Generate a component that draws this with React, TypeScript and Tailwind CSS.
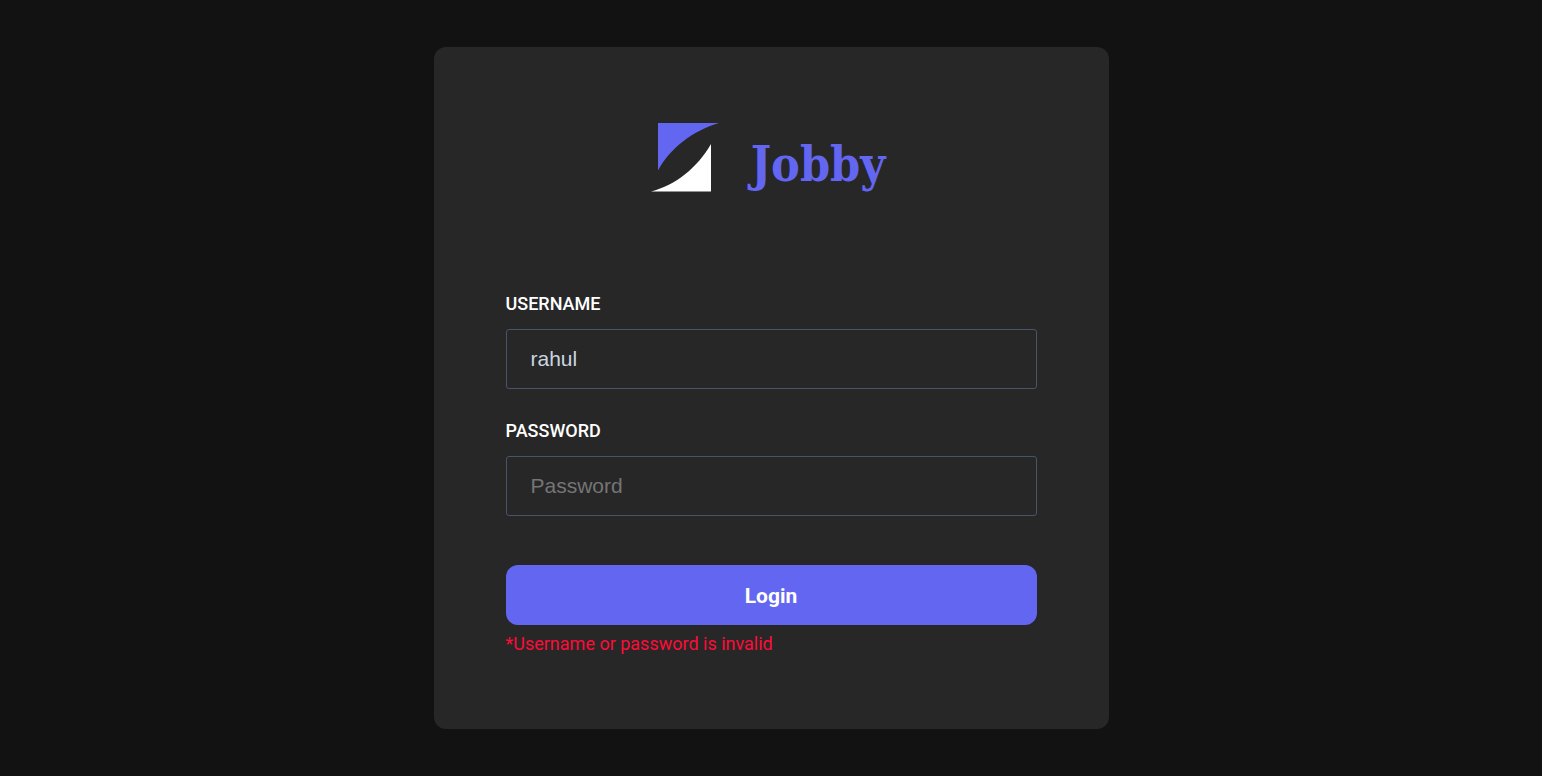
import { useState } from "react";
import type { FormEvent, InputHTMLAttributes } from "react";

function Logo() {
  return (
    <div className="flex h-19 items-end justify-center gap-8 pr-1.5 pb-[3px]">
      <svg viewBox="0 0 68 69" className="h-[69px] w-[68px]" aria-hidden="true">
        <path d="M7 0H68C42 8 20 24 7 47.500Z" fill="#6366f1" />
        <path d="M0 68.500H60V21C46 45 25 62 0 68.500Z" fill="#ffffff" />
      </svg>
      <span className="font-['DejaVu_Serif_Condensed','DejaVu_Serif',serif] text-[48px] leading-14 font-bold text-[#6366f1]">
        Jobby
      </span>
    </div>
  );
}

type FieldProps = InputHTMLAttributes<HTMLInputElement> & {
  id: string;
  label: string;
};

function Field({ id, label, ...rest }: FieldProps) {
  return (
    <div className="flex flex-col gap-[13px]">
      <label htmlFor={id} className="text-[18px] leading-6 font-medium text-white">
        {label}
      </label>
      <input
        id={id}
        className="h-15 w-full rounded-[3px] border border-[#475569] bg-transparent px-6 font-['Liberation_Sans',sans-serif] text-[21px] text-[#cbd5e1] outline-none placeholder:text-[#757575] focus:border-[#6366f1]"
        {...rest}
      />
    </div>
  );
}

export default function App() {
  const [username, setUsername] = useState("rahul");
  const [password, setPassword] = useState("");
  const [error, setError] = useState("*Username or password is invalid");

  const onSubmit = (event: FormEvent) => {
    event.preventDefault();
    setError("*Username or password is invalid");
  };

  return (
    <main className="flex min-h-screen items-center justify-center bg-[#121212] font-['Roboto',sans-serif]">
      <div className="w-full max-w-[675px] rounded-xl bg-[#272727] p-18">
        <Logo />
        <form onSubmit={onSubmit} className="mt-[97px] flex flex-col">
          <div className="flex flex-col gap-[30px]">
            <Field
              id="username"
              label="USERNAME"
              type="text"
              placeholder="Username"
              value={username}
              onChange={(event) => setUsername(event.target.value)}
            />
            <Field
              id="password"
              label="PASSWORD"
              type="password"
              placeholder="Password"
              value={password}
              onChange={(event) => setPassword(event.target.value)}
            />
          </div>
          <button
            type="submit"
            className="mt-[49px] h-15 w-full cursor-pointer rounded-xl bg-[#6366f1] pt-[3px] text-[21px] font-bold text-white"
          >
            Login
          </button>
          {error && (
            <p role="alert" className="mt-[6px] text-[18px] leading-[26px] text-[#ff0b37]">
              {error}
            </p>
          )}
        </form>
      </div>
    </main>
  );
}
